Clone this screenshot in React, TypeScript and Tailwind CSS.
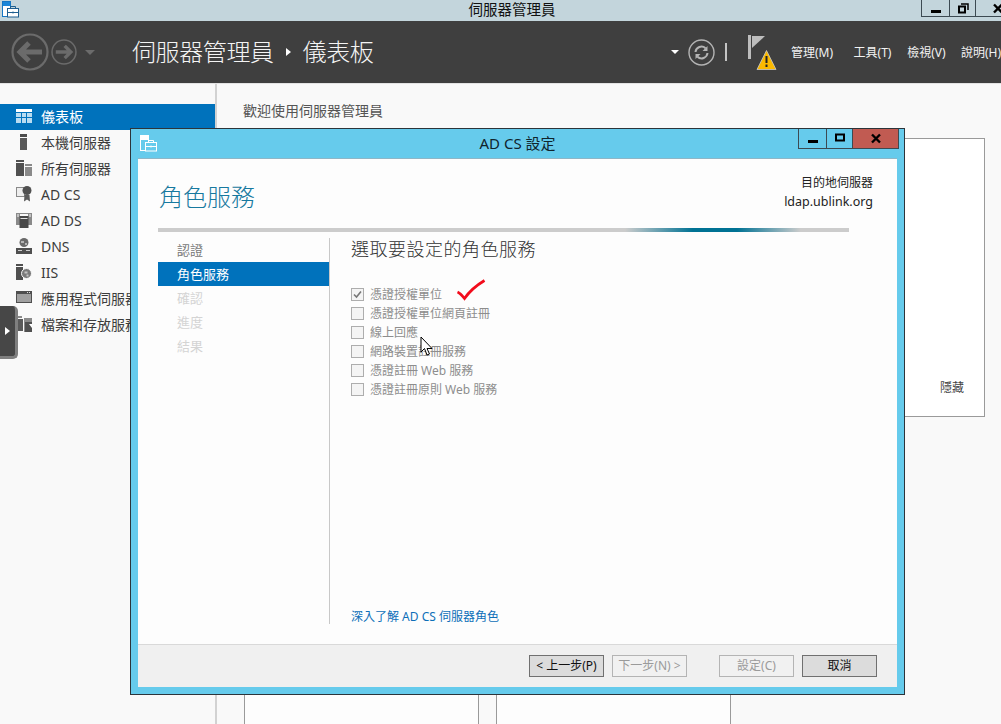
import type { ReactNode } from 'react'

const FONT = "font-['Noto_Sans','Noto_Sans_CJK_TC',sans-serif]"

function AppIcon({ light = false }: { light?: boolean }) {
  const line = light ? '#ffffff' : '#1576c4'
  const caseLine = light ? '#ffffff' : '#1f5f90'
  const fill = light ? '#66cbec' : '#ffffff'
  return (
    <svg width="17" height="17" viewBox="0 0 17 17" aria-hidden>
      <rect x="0.500" y="0.500" width="8" height="15" fill={fill} stroke={line} />
      <rect x="1" y="1" width="7" height="4" fill={light ? '#ffffff' : '#1b86d8'} />
      <rect x="5.500" y="7.500" width="11" height="8.500" fill={light ? '#66cbec' : '#ffffff'} stroke={caseLine} />
      <path d="M8.500 7.500V5.500h5v2M5.500 11.500h11M11 10.500v2" fill="none" stroke={caseLine} />
    </svg>
  )
}

function Dashboard() {
  return (
    <svg width="16" height="14" viewBox="0 0 16 14" aria-hidden>
      <rect width="16" height="3" fill="#fff" />
      <path d="M0 4h5v4H0zM6 4h4v4H6zM11 4h5v4h-5zM0 9h5v5H0zM6 9h4v5H6zM11 9h5v5h-5z" fill="#b9dcf1" />
    </svg>
  )
}

function ServerIcon() {
  return (
    <svg width="16" height="16" viewBox="0 0 16 16" aria-hidden>
      <rect x="4" y="0" width="7" height="3" fill="#4c4c4c" />
      <rect x="4" y="4" width="7" height="12" fill="#595959" />
    </svg>
  )
}

function ServersIcon() {
  return (
    <svg width="16" height="16" viewBox="0 0 16 16" aria-hidden>
      <path d="M0 0h8v2H0zM0 3h8v13H0z" fill="#505050" />
      <path d="M9 4h7v2H9zM9 7h7v9H9z" fill="#8a8a8a" />
    </svg>
  )
}

function AdcsIcon() {
  return (
    <svg width="16" height="16" viewBox="0 0 16 16" aria-hidden>
      <rect x="0.500" y="1.500" width="8" height="9" fill="#eee" stroke="#8a8a8a" />
      <path d="M8.500 9l-0.500 6.500 3-2 3 2-0.500-6.500z" fill="#5a5a5a" />
      <circle cx="11" cy="4.500" r="4.500" fill="#505050" />
    </svg>
  )
}

function AddsIcon() {
  return (
    <svg width="16" height="16" viewBox="0 0 16 16" aria-hidden>
      <path d="M0 1h4v12H0zM12 1h4v12h-4zM4 1h8v1H4z" fill="#8a8a8a" />
      <path d="M2 2v3M14 2v3" stroke="#f9f9f9" />
      <rect x="3.500" y="4" width="9" height="12" fill="#484848" />
      <rect x="4.500" y="6" width="7" height="1" fill="#e2e2e2" />
    </svg>
  )
}

function DnsIcon() {
  return (
    <svg width="16" height="16" viewBox="0 0 16 16" aria-hidden>
      <circle cx="8" cy="4.500" r="4.500" fill="#6a6a6a" />
      <path d="M5 3h3v2H5zM9 5h2v2H9z" fill="#b5b5b5" />
      <rect x="0" y="10" width="16" height="6" fill="#4f4f4f" />
      <path d="M2 12.500h4M10 12.500h4" stroke="#cfcfcf" />
    </svg>
  )
}

function IisIcon() {
  return (
    <svg width="16" height="16" viewBox="0 0 16 16" aria-hidden>
      <path d="M0 0h7v2H0zM0 3h7v13H0z" fill="#4f4f4f" />
      <circle cx="10.500" cy="9.500" r="5" fill="#7a7a7a" stroke="#f9f9f9" />
      <path d="M8.500 7.500h3v2h-3zM10.500 10.500h2v2h-2z" fill="#c4c4c4" />
    </svg>
  )
}

function AppServerIcon() {
  return (
    <svg width="16" height="16" viewBox="0 0 16 16" aria-hidden>
      <rect x="0" y="1" width="16" height="12" fill="#4f4f4f" />
      <rect x="1" y="4" width="14" height="8" fill="#a0a0a0" />
      <path d="M11 2h1v1h-1zM13 2h1v1h-1z" fill="#ddd" />
    </svg>
  )
}

function FilesIcon() {
  return (
    <svg width="16" height="16" viewBox="0 0 16 16" aria-hidden>
      <path d="M0 0h6v2H0z" fill="#8a8a8a" />
      <path d="M0 3h7v12H0z" fill="#5a5a5a" />
      <path d="M8 2h8v14H8z" fill="#8a8a8a" />
      <path d="M9 6h7v10H9z" fill="#505050" />
      <path d="M13 8h3v4z" fill="#fff" />
    </svg>
  )
}

function RoundArrow({ size, dir }: { size: number; dir: 'left' | 'right' }) {
  return (
    <svg width={size} height={size} viewBox="0 0 38 38" aria-hidden>
      <circle cx="19" cy="19" r="17.500" fill="none" stroke="#6b6b6b" strokeWidth="2.200" />
      <path
        d={dir === 'left' ? 'M31 19H9M18 10l-9 9 9 9' : 'M7 19h22M20 10l9 9-9 9'}
        fill="none"
        stroke="#6b6b6b"
        strokeWidth="5"
      />
    </svg>
  )
}

function Refresh() {
  return (
    <svg width="27" height="27" viewBox="0 0 27 27" aria-hidden>
      <circle cx="13.500" cy="13.500" r="12.500" fill="none" stroke="#b4b4b4" strokeWidth="1.400" />
      <path d="M7.500 13a6 6 0 0 1 10-3.800M19.500 14a6 6 0 0 1-10 3.800" fill="none" stroke="#b4b4b4" strokeWidth="2" />
      <path d="M19.500 7v5h-5zM7.500 20v-5h5z" fill="#b4b4b4" />
    </svg>
  )
}

function FlagWarning() {
  return (
    <svg width="30" height="36" viewBox="0 0 30 36" aria-hidden>
      <rect x="0" y="0" width="3" height="24" fill="#bdbdbd" />
      <path d="M4 1h13L4 13z" fill="#bdbdbd" />
      <path d="M18.500 15.500l9.500 19H9z" fill="#fbb900" stroke="#c9c9c9" strokeWidth="0.800" />
      <path d="M17.500 21h2v7h-2zM17.500 29.500h2V32h-2z" fill="#222" />
    </svg>
  )
}

function WinButton({ kind, className }: { kind: 'min' | 'max' | 'restore' | 'close'; className: string }) {
  return (
    <div className={`flex items-center border-l border-[#3c4a52] ${className}`}>
      <svg width="12" height="11" viewBox="0 0 12 11" className="shrink-0" aria-hidden>
        {kind === 'min' && <rect x="1" y="7" width="10" height="3" fill="#000" />}
        {kind === 'max' && <rect x="2" y="1.500" width="8" height="6" fill="none" stroke="#000" strokeWidth="2" />}
        {kind === 'restore' && (
          <>
            <path d="M4 1h7v6" fill="none" stroke="#000" strokeWidth="1.500" />
            <rect x="2" y="3.500" width="6" height="6" fill="none" stroke="#000" strokeWidth="2" />
          </>
        )}
        {kind === 'close' && <path d="M2 1.500l8 8M10 1.500l-8 8" fill="none" stroke="#000" strokeWidth="2.400" />}
      </svg>
    </div>
  )
}

const SIDE_ITEMS: [ReactNode, string][] = [
  [<ServerIcon />, '本機伺服器'],
  [<ServersIcon />, '所有伺服器'],
  [<AdcsIcon />, 'AD CS'],
  [<AddsIcon />, 'AD DS'],
  [<DnsIcon />, 'DNS'],
  [<IisIcon />, 'IIS'],
  [<AppServerIcon />, '應用程式伺服器'],
  [<FilesIcon />, '檔案和存放服務'],
]

const ROLES = ['憑證授權單位', '憑證授權單位網頁註冊', '線上回應', '網路裝置註冊服務', '憑證註冊 Web 服務', '憑證註冊原則 Web 服務']

function DialogButton({ children, tone }: { children: ReactNode; tone: 'on' | 'off' }) {
  return (
    <div
      className={`w-[75px] h-[22px] flex items-center justify-center text-[12px] border ${
        tone === 'on' ? 'bg-[#dcdcdc] border-[#707070] text-[#111]' : 'bg-[#f1f1f1] border-[#b4b4b4] text-[#9a9a9a]'
      }`}
    >
      {children}
    </div>
  )
}

function Dialog() {
  return (
    <div className="absolute left-[130px] top-[128px] w-[775px] h-[567px] flex flex-col border border-[#2c343a] bg-[#66cbec] px-[7px] pb-[7px]">
      <div className="h-[29px] shrink-0 flex items-stretch relative">
        <div className="absolute left-[2px] top-[6px]">
          <AppIcon light />
        </div>
        <div className="flex-1 text-center text-[15px] leading-[29px] text-[#10242c]">AD CS 設定</div>
        <div className="absolute right-[-2px] top-0 h-[20px] flex border-b border-r border-[#3c4a52]">
          <WinButton kind="min" className="w-[28px] justify-center" />
          <WinButton kind="max" className="w-[26px] justify-center" />
          <WinButton kind="close" className="w-[46px] justify-center bg-[#c15b52]" />
        </div>
      </div>
      <div className="flex-1 min-h-0 flex flex-col bg-[#fdfdfd] border-t border-[#8fb6c6]">
        <div className="h-[69px] shrink-0 flex justify-between pl-[21px] pr-[24px]">
          <div className="pt-[21px] text-[24px] leading-[34px] font-light text-[#17799f]">角色服務</div>
          <div className="pt-[14px] text-right text-[12px] leading-[19px] text-[#222]">
            <div>目的地伺服器</div>
            <div className="text-[12.500px]">ldap.ublink.org</div>
          </div>
        </div>
        <div className="ml-[20px] mr-[48px] h-[4px] shrink-0 bg-[linear-gradient(to_right,#cccccc_0%,#cccccc_67.600%,#007294_77.400%,#007294_83.800%,#cccccc_93%,#cccccc_100%)]" />
        <div className="flex-1 min-h-0 flex pt-[6px] pb-[20px]">
          <div className="w-[172px] shrink-0 ml-[20px] border-r border-[#c8c8c8] flex flex-col text-[13px]">
            <div className="w-[171px] h-[24px] pl-[19px] leading-[24px] text-[#777]">認證</div>
            <div className="w-[171px] h-[24px] pl-[19px] leading-[24px] bg-[#0072bc] text-white">角色服務</div>
            <div className="w-[171px] h-[24px] pl-[19px] leading-[24px] text-[#d4d4d4]">確認</div>
            <div className="w-[171px] h-[24px] pl-[19px] leading-[24px] text-[#d4d4d4]">進度</div>
            <div className="w-[171px] h-[24px] pl-[19px] leading-[24px] text-[#d4d4d4]">結果</div>
          </div>
          <div className="flex-1 flex flex-col pl-[21px]">
            <div className="text-[18px] leading-[22px] tracking-[0.5px] font-light text-[#333]">選取要設定的角色服務</div>
            <div className="mt-[25px] flex flex-col">
              {ROLES.map((r, i) => (
                <div key={r} className="h-[19px] flex items-center gap-[6px] text-[12px] text-[#8d8d8d]">
                  <span className="w-[13px] h-[13px] flex items-center justify-center border border-[#adadad] bg-[#f4f4f4]">
                    {i === 0 && (
                      <svg width="9" height="9" viewBox="0 0 9 9" aria-hidden>
                        <path d="M1 4.500l2.500 2.500L8 1.500" fill="none" stroke="#777" strokeWidth="1.600" />
                      </svg>
                    )}
                  </span>
                  {r}
                </div>
              ))}
            </div>
            <div className="mt-auto text-[12px] leading-[14px] text-[#0d6fb8]">深入了解 AD CS 伺服器角色</div>
          </div>
        </div>
        <div className="h-[43px] shrink-0 flex items-center justify-end gap-[8px] pr-[20px] pb-[1px] bg-[#f0f0f0] border-t border-[#d9d9d9]">
          <DialogButton tone="on">&lt; 上一步(P)</DialogButton>
          <DialogButton tone="off">下一步(N) &gt;</DialogButton>
          <div className="w-[16px]" />
          <DialogButton tone="off">設定(C)</DialogButton>
          <DialogButton tone="on">取消</DialogButton>
        </div>
      </div>
    </div>
  )
}

export default function App() {
  return (
    <div className={`relative w-[1001px] h-[724px] overflow-hidden flex flex-col bg-[#f9f9f9] ${FONT}`}>
      <div className="relative h-[21px] shrink-0 bg-[#c3d5dc] flex items-center justify-center pb-[3px] text-[14.500px] leading-[16px] text-[#111]">
        <div className="absolute left-[2px] top-[1px]">
          <AppIcon />
        </div>
        <span className="ml-[23px]">伺服器管理員</span>
        <div className="absolute right-0 top-0 h-[17px] flex border-b border-[#3c4a52]">
          <WinButton kind="min" className="w-[28px] justify-center" />
          <WinButton kind="restore" className="w-[26px] justify-center" />
          <WinButton kind="close" className="w-[26px] justify-start pl-[16px] overflow-hidden" />
        </div>
      </div>

      <div className="h-[62px] shrink-0 bg-[#3f3f3f] flex items-center text-white">
        <div className="ml-[11px] flex items-center gap-[2px]">
          <RoundArrow size={38} dir="left" />
          <RoundArrow size={26} dir="right" />
          <span className="ml-[6px] w-0 h-0 border-x-[5px] border-x-transparent border-t-[5px] border-t-[#6b6b6b]" />
        </div>
        <div className="ml-[37px] flex items-center text-[24px] font-light tracking-[-0.4px] text-[#f4f4f4]">
          <span>伺服器管理員</span>
          <span className="mx-[12px] w-0 h-0 border-y-[4px] border-y-transparent border-l-[5px] border-l-white" />
          <span>儀表板</span>
        </div>
        <div className="ml-auto flex items-center">
          <span className="w-0 h-0 border-x-[4px] border-x-transparent border-t-[4px] border-t-white" />
          <span className="ml-[9px] flex">
            <Refresh />
          </span>
          <span className="ml-[10px] w-[2px] h-[18px] bg-[#c4c4c4]" />
          <span className="ml-[21px] mt-[2px] flex">
            <FlagWarning />
          </span>
          <div className="ml-[13px] mt-[2px] w-[210px] shrink-0 flex text-[12px] text-[#f2f2f2] whitespace-nowrap">
            <span className="w-[63px]">管理(M)</span>
            <span className="w-[54px]">工具(T)</span>
            <span className="w-[54px]">檢視(V)</span>
            <span>說明(H)</span>
          </div>
        </div>
      </div>

      <div className="flex-1 min-h-0 flex border-t border-[#e3e3e3]">
        <div className="w-[215px] shrink-0 pt-[20px] text-[14px] text-[#3c3c3c]">
          <div className="h-[26px] flex items-center gap-[9px] pl-[16px] pb-[2px] bg-[#0072bc] text-white">
            <Dashboard />
            儀表板
          </div>
          {SIDE_ITEMS.map(([icon, label]) => (
            <div key={label} className="h-[26px] flex items-center gap-[9px] pl-[16px] pb-[2px] whitespace-nowrap">
              <span className="flex w-[16px]">{icon}</span>
              {label}
            </div>
          ))}
        </div>
        <div className="flex-1 min-w-0 border-l-2 border-[#d2d2d2] pl-[27px] pr-[16px] pt-[19px]">
          <div className="-ml-[1px] text-[14px] leading-[16px] text-[#555]">歡迎使用伺服器管理員</div>
          <div className="mt-[19px] h-[279px] bg-white border border-[#9a9a9a] flex items-end justify-end pr-[20px] pb-[19px]">
            <span className="text-[12px] text-[#444]">隱藏</span>
          </div>
          <div className="mt-[20px] grid grid-cols-[235px_235px] gap-x-[17px]">
            <div className="h-[400px] bg-[#fdfdfd] border border-[#9a9a9a]" />
            <div className="h-[400px] bg-[#fdfdfd] border border-[#9a9a9a]" />
          </div>
        </div>
      </div>

      <div className="absolute left-0 top-[306px] w-[18px] h-[53px] flex items-center justify-center rounded-r-[5px] bg-[#474747] border-r-[3px] border-b-[3px] border-[#7f7f7f]">
        <span className="w-0 h-0 border-y-[4px] border-y-transparent border-l-[5px] border-l-white" />
      </div>

      <Dialog />

      <svg className="absolute left-[456px] top-[279px]" width="30" height="22" viewBox="0 0 30 22" aria-hidden>
        <path d="M1.500 13c2.500 1 5 4 7 6.500C13 13 21 6 28.500 1.500" fill="none" stroke="#f20c1c" strokeWidth="2.800" />
      </svg>
      <svg className="absolute left-[420px] top-[336px]" width="13" height="21" viewBox="0 0 13 21" aria-hidden>
        <path d="M1 1v15l3.500-3.500L7 19l2.500-1-2.500-5.500h5z" fill="#fff" stroke="#000" />
      </svg>
    </div>
  )
}
